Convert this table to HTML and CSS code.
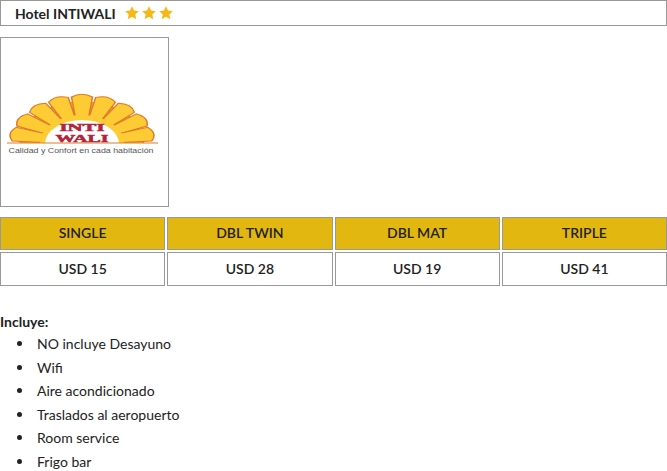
FILE: index.html
```
<!DOCTYPE html>
<html lang="es">
<head>
<meta charset="utf-8">
<link rel="stylesheet" href="styles.css">
</head>
<body>
<div class="title">
  <span class="name">Hotel INTIWALI</span>
  <span class="stars">
    <svg viewBox="0 0 24 24" class="star"><path d="M12 1.8l3.1 6.6 7.1.8-5.3 4.9 1.5 7.1L12 17.6l-6.4 3.6 1.5-7.1-5.3-4.9 7.1-.8z"/></svg>
    <svg viewBox="0 0 24 24" class="star"><path d="M12 1.8l3.1 6.6 7.1.8-5.3 4.9 1.5 7.1L12 17.6l-6.4 3.6 1.5-7.1-5.3-4.9 7.1-.8z"/></svg>
    <svg viewBox="0 0 24 24" class="star"><path d="M12 1.8l3.1 6.6 7.1.8-5.3 4.9 1.5 7.1L12 17.6l-6.4 3.6 1.5-7.1-5.3-4.9 7.1-.8z"/></svg>
  </span>
</div>

<div class="photo">
  <svg class="logo" viewBox="0 0 167 168" width="167" height="168">
    <defs>
      <clipPath id="above">
        <rect x="0" y="0" width="167" height="105"/>
      </clipPath>
      <path id="rl" d="M-3.5 -18 L-7 -46 Q0 -51.5 7 -46 L3.5 -18 Z"/>
      <path id="rs" d="M-3 -18 L-6 -39 Q0 -43 6 -39 L3 -18 Z"/>
    </defs>
    <g clip-path="url(#above)">
      <g transform="translate(81 105) scale(1.5 1)" stroke="#df7a2c" stroke-width="1">
        <g fill="#fbb829">
          <use href="#rs" transform="rotate(-10)"/>
          <use href="#rs" transform="rotate(10)"/>
          <use href="#rs" transform="rotate(-30)"/>
          <use href="#rs" transform="rotate(30)"/>
          <use href="#rs" transform="rotate(-50)"/>
          <use href="#rs" transform="rotate(50)"/>
          <use href="#rs" transform="rotate(-70)"/>
          <use href="#rs" transform="rotate(70)"/>
          <use href="#rs" transform="rotate(-88)"/>
          <use href="#rs" transform="rotate(88)"/>
        </g>
        <g fill="#fdcb33">
          <use href="#rl" transform="rotate(0)"/>
          <use href="#rl" transform="rotate(-20)"/>
          <use href="#rl" transform="rotate(20)"/>
          <use href="#rl" transform="rotate(-40)"/>
          <use href="#rl" transform="rotate(40)"/>
          <use href="#rl" transform="rotate(-60)"/>
          <use href="#rl" transform="rotate(60)"/>
          <use href="#rl" transform="rotate(-79)"/>
          <use href="#rl" transform="rotate(79)"/>
        </g>
        <ellipse cx="0" cy="0" rx="28" ry="28" fill="#fdcb33" stroke="none"/>
      </g>
      <ellipse cx="81" cy="106" rx="37" ry="24" fill="#fff"/>
    </g>
    <path d="M6 105 H157" stroke="#df7a2c" stroke-width="1"/>
    <text x="81" y="92.5" class="logo-t" textLength="45" lengthAdjust="spacingAndGlyphs">INTI</text>
    <text x="81" y="104" class="logo-t" textLength="53" lengthAdjust="spacingAndGlyphs">WALI</text>
    <text x="80" y="115" class="logo-s" textLength="145" lengthAdjust="spacingAndGlyphs">Calidad y Confort en cada habitación</text>
  </svg>
</div>

<div class="rates">
  <div class="cell head">SINGLE</div>
  <div class="cell head">DBL TWIN</div>
  <div class="cell head">DBL MAT</div>
  <div class="cell head">TRIPLE</div>
  <div class="cell">USD 15</div>
  <div class="cell">USD 28</div>
  <div class="cell">USD 19</div>
  <div class="cell">USD 41</div>
</div>

<div class="includes">
  <div class="inc-title">Incluye:</div>
  <ul class="inc-list">
    <li>NO incluye Desayuno</li>
    <li>Wifi</li>
    <li>Aire acondicionado</li>
    <li>Traslados al aeropuerto</li>
    <li>Room service</li>
    <li>Frigo bar</li>
  </ul>
</div>
</body>
</html>
```
FILE: styles.css
```
html, body {
  margin: 0;
  padding: 0;
  background: #fff;
}
body {
  font-family: Lato, "Open Sans", sans-serif;
  color: #222;
  font-size: 14px;
  width: 667px;
}
.title {
  border: 1px solid #999;
  display: flex;
  align-items: center;
  padding-left: 14px;
  box-sizing: border-box;
  height: 26px;
}
.name {
  font-weight: 700;
  font-size: 14px;
  color: #222;
}
.stars {
  display: flex;
  margin-left: 8px;
  gap: 1px;
}
.star {
  width: 16px;
  height: 16px;
  fill: #f5b817;
}
.photo {
  margin-top: 11px;
  width: 169px;
  height: 170px;
  border: 1px solid #999;
  box-sizing: border-box;
}
.logo {
  display: block;
}
.logo use {
  vector-effect: non-scaling-stroke;
}
.logo-t {
  font-family: "Liberation Serif", serif;
  font-weight: 700;
  font-size: 10.5px;
  fill: #b3243a;
  stroke: #b3243a;
  stroke-width: 0.5px;
  text-anchor: middle;
}
.logo-s {
  font-family: "Liberation Sans", Arial, sans-serif;
  font-size: 7.5px;
  fill: #555;
  text-anchor: middle;
}
.rates {
  margin-top: 10px;
  display: grid;
  grid-template-columns: repeat(4, 1fr);
  gap: 2px;
}
.cell {
  border: 1px solid #999;
  height: 34px;
  box-sizing: border-box;
  display: flex;
  align-items: center;
  justify-content: center;
  padding-bottom: 2px;
  font-weight: 600;
  font-size: 14px;
  color: #222;
}
.cell.head {
  background: #e2b70f;
  height: 33px;
}
.includes {
  margin-top: 26px;
}
.inc-title {
  font-weight: 700;
  font-size: 14px;
  line-height: 20px;
}
.inc-list {
  margin: 0;
  padding-left: 17px;
  list-style: none;
}
.inc-list li {
  line-height: 23.5px;
  font-size: 14px;
  display: flex;
  align-items: center;
}
.inc-list li::before {
  content: "";
  width: 5px;
  height: 5px;
  border-radius: 50%;
  background: #222;
  margin-right: 15px;
  flex: none;
}
```
